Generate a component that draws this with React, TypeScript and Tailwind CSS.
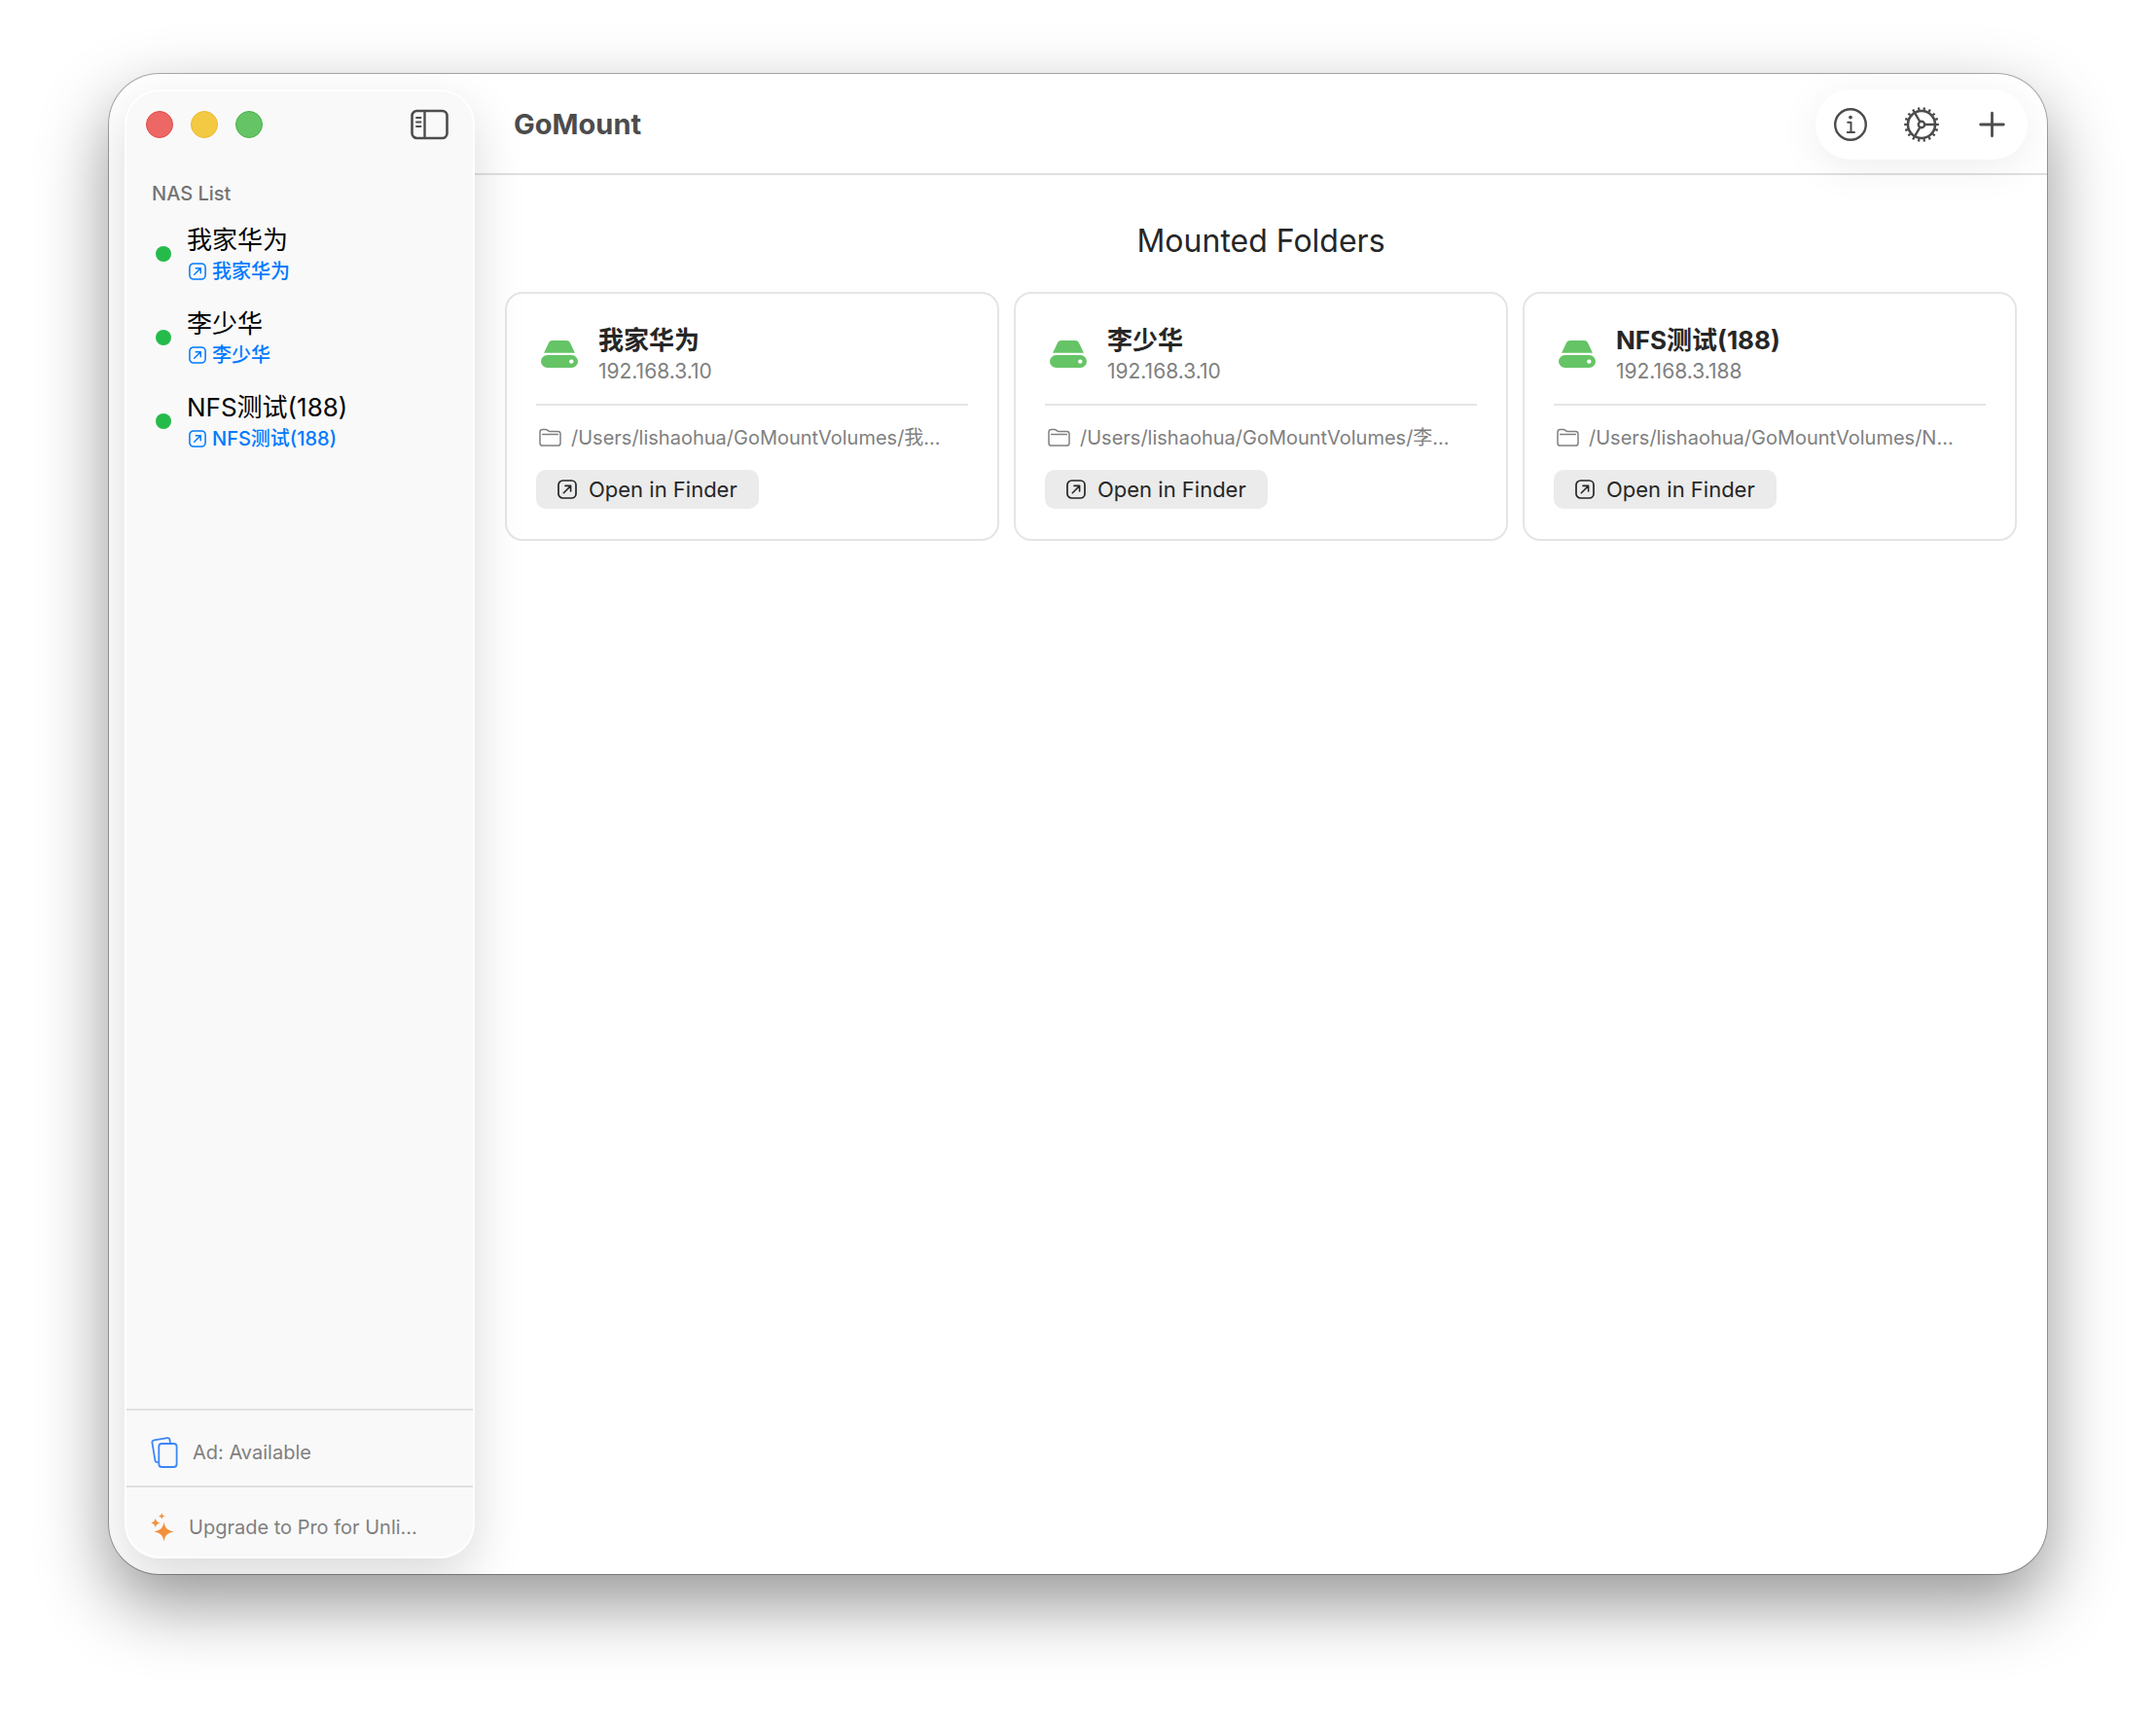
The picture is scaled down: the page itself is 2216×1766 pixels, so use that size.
import type { ReactNode } from "react";

interface Nas {
  name: string;
  host: string;
  path: string;
}

const NAS_LIST: Nas[] = [
  { name: "我家华为", host: "192.168.3.10", path: "/Users/lishaohua/GoMountVolumes/我…" },
  { name: "李少华", host: "192.168.3.10", path: "/Users/lishaohua/GoMountVolumes/李…" },
  { name: "NFS测试(188)", host: "192.168.3.188", path: "/Users/lishaohua/GoMountVolumes/N…" },
];

function SidebarIcon() {
  return (
    <svg className="w-10 h-8" viewBox="0 0 40 32" fill="none" stroke="currentColor" strokeLinecap="round">
      <rect x="1.5" y="2" width="36" height="28" rx="5" strokeWidth="2.6" />
      <path d="M14.5 2v28" strokeWidth="2.4" strokeLinecap="butt" />
      <path d="M6 9h4.5M6 13.5h4.5M6 18h4.5" strokeWidth="1.8" />
    </svg>
  );
}

function ArrowSquareIcon({ className }: { className: string }) {
  return (
    <svg className={className} viewBox="0 0 20 20" fill="none" stroke="currentColor" strokeLinecap="round" strokeLinejoin="round">
      <rect x="1" y="1" width="18" height="18" rx="4.5" strokeWidth="1.7" />
      <path d="M6.3 13.7l7-7M8 6.4h5.6V12" strokeWidth="1.6" />
    </svg>
  );
}

function InfoIcon() {
  return (
    <svg className="size-9" viewBox="0 0 36 36" fill="none" stroke="currentColor" strokeLinecap="round" strokeLinejoin="round">
      <circle cx="18" cy="18" r="15.8" strokeWidth="2.4" />
      <circle cx="18" cy="10.6" r="1.9" fill="currentColor" stroke="none" />
      <path d="M15.2 15.8h3.3v10M14.8 26h7.2" strokeWidth="2" />
    </svg>
  );
}

function GearIcon() {
  return (
    <svg className="size-9" viewBox="0 0 36 36" fill="none" stroke="currentColor">
      <circle cx="18" cy="18" r="14" strokeWidth="2.6" />
      <circle cx="18" cy="18" r="16.3" strokeWidth="3" pathLength="180" strokeDasharray="4 6" strokeDashoffset="2" />
      <circle cx="18" cy="18" r="3.2" strokeWidth="2.4" />
      <path d="M21.5 18H32M16.3 15L11 5.9M16.3 21L11 30.1" strokeWidth="2.4" />
    </svg>
  );
}

function PlusIcon() {
  return (
    <svg className="size-9" viewBox="0 0 36 36" fill="none" stroke="currentColor" strokeWidth="2.8" strokeLinecap="round">
      <path d="M17.5 6.2v23.6M5.7 18h23.6" />
    </svg>
  );
}

function DriveIcon() {
  return (
    <svg className="w-10 h-8 text-[#65c466]" viewBox="0 0 40 32" fill="currentColor">
      <path d="M4.1 14.8L8.6 5.2C9.4 3 10.7 2 13 2h14c2.3 0 3.6 1 4.4 3.2l4.5 9.6z" />
      <path
        fillRule="evenodd"
        d="M7.5 17h25a6.5 6.5 0 0 1 0 13h-25a6.5 6.5 0 0 1 0-13zM32.3 21.4a2.2 2.2 0 1 0 .01 0z"
      />
    </svg>
  );
}

function FolderIcon() {
  return (
    <svg className="w-6 h-5 shrink-0" viewBox="0 0 24 20" fill="none" stroke="currentColor" strokeWidth="1.5" strokeLinejoin="round">
      <path d="M2 4.2C2 2.5 2.9 1.6 4.6 1.6h3.2c.9 0 1.4.2 2 .7l.5.4c.6.5 1 .7 1.9.7h8.2c1.7 0 2.6.9 2.6 2.6v9.4c0 1.7-.9 2.6-2.6 2.6H4.6C2.9 18 2 17.1 2 15.4z" />
      <path d="M4.6 6.4h15.8" strokeLinecap="round" />
    </svg>
  );
}

function CardsIcon() {
  return (
    <svg className="w-7 h-9 text-[#3a86f7]" viewBox="0 0 28 36" fill="none" stroke="currentColor" strokeWidth="1.8" strokeLinejoin="round" strokeLinecap="round">
      <rect x="8.3" y="9" width="18.3" height="24" rx="3" />
      <path d="M20 8.6l-.5-3.4c-.2-1.4-1.2-2.2-2.6-2L3.5 5.3C2.1 5.5 1.2 6.500 1.4 7.9l3 18.3c.2 1.3 1.2 2.1 2.6 2" />
    </svg>
  );
}

function SparklesIcon() {
  return (
    <svg className="w-6 h-8 text-[#f2913d]" viewBox="0 0 24 32" fill="currentColor">
      <path d="M13.5 10.5c1.2 6.3 3.2 8.3 10 9.9-6.8 1.6-8.8 3.6-10 10.1-1.2-6.5-3.2-8.5-10-10.1 6.8-1.6 8.8-3.6 10-9.9z" />
      <path d="M4.8 6.5c.7 3.1 1.7 4.2 5 5-3.3.8-4.3 1.9-5 5-.7-3.1-1.7-4.2-5-5 3.3-.8 4.3-1.9 5-5z" />
      <path d="M11.2 1.3c.5 2 1.2 2.7 3.3 3.2-2.1.5-2.8 1.2-3.3 3.2-.5-2-1.2-2.7-3.3-3.2 2.1-.5 2.8-1.2 3.3-3.2z" />
    </svg>
  );
}

function NasItem({ nas }: { nas: Nas }) {
  return (
    <li className="flex items-center gap-4 h-[86px] pl-[30px]">
      <span className="size-4 rounded-full bg-[#25bb4b]" />
      <div className="pt-0.5">
        <p className="text-[26px] leading-[34px] text-black">{nas.name}</p>
        <a href="#" className="flex items-center gap-1.5 text-[20px] leading-[30px] font-medium text-[#007aff]">
          <ArrowSquareIcon className="size-[18px] ml-0.5" />
          {nas.name}
        </a>
      </div>
    </li>
  );
}

function Sidebar() {
  return (
    <aside className="relative z-10 flex flex-col w-[360px] m-4 mr-0 rounded-[36px] border-2 border-white bg-[#f9f9f9] shadow-[0_20px_52px_rgba(0,0,0,0.15)]">
      <div className="flex items-center gap-[18px] h-[68px] pl-5 pr-6">
        <button aria-label="Close" className="size-7 rounded-full bg-[#ed6765] border border-[#e24b48]" />
        <button aria-label="Minimize" className="size-7 rounded-full bg-[#f3c944] border border-[#e9b92c]" />
        <button aria-label="Zoom" className="size-7 rounded-full bg-[#65c466] border border-[#4bb24c]" />
        <button aria-label="Toggle sidebar" className="ml-auto text-[#4c4c4c]">
          <SidebarIcon />
        </button>
      </div>
      <h2 className="mt-5 pl-[26px] text-[20px] leading-[34px] font-medium text-[#737373]">NAS List</h2>
      <ul className="mt-0.5">
        {NAS_LIST.map((nas) => (
          <NasItem key={nas.name} nas={nas} />
        ))}
      </ul>
      <div className="mt-auto text-[20px] text-[#7f7f7f]">
        <div className="flex items-center gap-[15px] h-[79px] pl-[25px] pt-2 border-t-2 border-[#e0e0e0]">
          <CardsIcon />
          <span>Ad: Available</span>
        </div>
        <div className="flex items-center gap-[15px] h-[73px] pl-[25px] pt-2.5 border-t-2 border-[#e0e0e0]">
          <SparklesIcon />
          <span>Upgrade to Pro for Unli…</span>
        </div>
      </div>
    </aside>
  );
}

function ToolbarButton({ label, children }: { label: string; children: ReactNode }) {
  return (
    <button aria-label={label} className="grid place-items-center size-9">
      {children}
    </button>
  );
}

function FolderCard({ nas }: { nas: Nas }) {
  return (
    <article className="min-w-0 px-[30px] py-[31px] rounded-[18px] border-2 border-[#e5e5e5]">
      <div className="flex items-center gap-5 h-[82px] pl-1 pb-5">
        <DriveIcon />
        <div className="pt-0.5">
          <h3 className="text-[26px] leading-[34px] font-bold text-[#262626]">{nas.name}</h3>
          <p className="text-[21px] leading-[30px] text-[#808080]">{nas.host}</p>
        </div>
      </div>
      <hr className="border-t-2 border-[#e5e5e5]" />
      <div className="flex items-center gap-2.5 h-[66px] pl-0.5 text-[20px] text-[#808080]">
        <FolderIcon />
        <p className="truncate">{nas.path}</p>
      </div>
      <button className="flex items-center gap-3 h-10 px-[22px] rounded-[10px] bg-[#ebebeb] text-[22px] text-[#262626]">
        <ArrowSquareIcon className="size-5" />
        Open in Finder
      </button>
    </article>
  );
}

export default function App() {
  return (
    <div className="flex min-h-screen px-28 pt-19 pb-37 bg-white font-['Inter','Noto_Sans_CJK_SC',sans-serif]">
      <div className="flex flex-1 overflow-hidden rounded-[52px] bg-white shadow-[0_0_0_1px_rgba(0,0,0,0.3),0_30px_72px_rgba(0,0,0,0.42)]">
        <Sidebar />
        <main className="flex-1 min-w-0">
          <header className="flex items-center justify-between h-[104px] pl-10 pr-5 pt-0.5 border-b-2 border-[#e0e0e0] text-[#4c4c4c]">
            <h1 className="text-[29px] font-bold">GoMount</h1>
            <div className="flex items-center justify-between w-[218px] h-[72px] px-[18px] rounded-full bg-white shadow-[0_8px_44px_rgba(0,0,0,0.07)]">
              <ToolbarButton label="Info">
                <InfoIcon />
              </ToolbarButton>
              <ToolbarButton label="Settings">
                <GearIcon />
              </ToolbarButton>
              <ToolbarButton label="Add NAS">
                <PlusIcon />
              </ToolbarButton>
            </div>
          </header>
          <section className="px-[31px] pt-11">
            <h2 className="text-center text-[32px] leading-[48px] text-[#262626]">Mounted Folders</h2>
            <div className="grid grid-cols-3 gap-[15px] mt-7">
              {NAS_LIST.map((nas) => (
                <FolderCard key={nas.name} nas={nas} />
              ))}
            </div>
          </section>
        </main>
      </div>
    </div>
  );
}
